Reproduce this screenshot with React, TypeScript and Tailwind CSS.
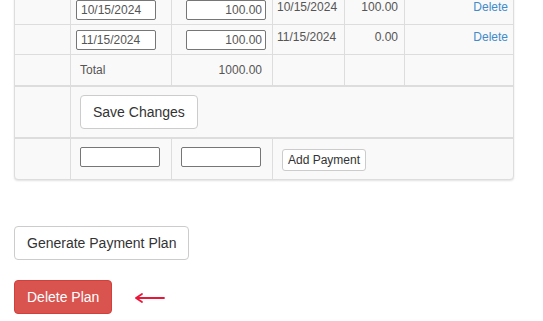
import React from 'react';

type Payment = { due: string; amount: string; paidOn: string; paid: string };

const payments: Payment[] = [
  { due: '10/15/2024', amount: '100.00', paidOn: '10/15/2024', paid: '100.00' },
  { due: '11/15/2024', amount: '100.00', paidOn: '11/15/2024', paid: '0.00' },
];

const cols = 'grid grid-cols-[56px_101px_101px_72px_60px_108px]';
const cell = 'border-r border-[#ddd]';

function PaymentRow({ p, first }: { p: Payment; first?: boolean }) {
  return (
    <div className={`${cols} ${first ? '' : 'border-t border-[#ddd]'}`}>
      <div className={cell} />
      <div className={`${cell} pl-[5px] pt-[5px] pb-[4px]`}>
        <input
          defaultValue={p.due}
          className="block h-[20px] w-[80px] rounded-[2px] border border-[#767676] bg-white px-[4px] text-[12px] text-[#555] outline-none"
        />
      </div>
      <div className={`${cell} flex justify-end pr-[6px] pt-[5px] pb-[4px]`}>
        <input
          defaultValue={p.amount}
          className="block h-[20px] w-[80px] rounded-[2px] border border-[#767676] bg-white px-[3px] text-right text-[12px] text-[#555] outline-none"
        />
      </div>
      <div className={`${cell} pl-[4px] pt-[5px] text-[12px] leading-[1.2] text-[#555]`}>{p.paidOn}</div>
      <div className={`${cell} pr-[6px] pt-[5px] text-right text-[12px] leading-[1.2] text-[#555]`}>{p.paid}</div>
      <div className="pr-[5px] pt-[5px] text-right text-[12px] leading-[1.2]">
        <a href="#" className="text-[#428bca]">Delete</a>
      </div>
    </div>
  );
}

export default function App() {
  return (
    <div className="min-h-[321px] bg-white px-[14px] text-[#333]" style={{ fontFamily: '"Liberation Sans", Arial, sans-serif' }}>
      <div className="-mt-[6px] w-[500px] overflow-hidden rounded-b-[4px] border border-[#ddd] bg-[#f9f9f9] shadow-[0_1px_2px_rgba(0,0,0,0.12)]">
        {payments.map((p, i) => (
          <PaymentRow key={p.due} p={p} first={i === 0} />
        ))}

        {/* Total */}
        <div className={`${cols} border-t border-[#ddd]`}>
          <div className={cell} />
          <div className={`${cell} py-[8px] pl-[9px] text-[12px] leading-[14px] text-[#555]`}>Total</div>
          <div className={`${cell} py-[8px] pr-[10px] text-right text-[12px] leading-[14px] text-[#555]`}>1000.00</div>
          <div className={cell} />
          <div className={cell} />
          <div />
        </div>

        {/* Save */}
        <div className={`${cols} border-t-2 border-[#ddd]`}>
          <div className={cell} />
          <div className="col-span-5 py-[8px] pl-[9px]">
            <button className="h-[34px] rounded-[4px] border border-[#ccc] bg-white px-[12px] text-[14px] text-[#333]">
              Save Changes
            </button>
          </div>
        </div>

        {/* New payment */}
        <div className={`${cols} border-t-2 border-[#ddd]`}>
          <div className={cell} />
          <div className={`${cell} py-[8px] pl-[9px]`}>
            <input className="block h-[20px] w-[80px] rounded-[2px] border border-[#767676] bg-white text-[12px] outline-none" />
          </div>
          <div className={`${cell} py-[8px] pl-[9px]`}>
            <input className="block h-[20px] w-[80px] rounded-[2px] border border-[#767676] bg-white text-[12px] outline-none" />
          </div>
          <div className="col-span-3 py-[8px] pl-[9px]">
            <button className="h-[22px] rounded-[3px] border border-[#ccc] bg-white px-[5px] text-[12px] text-[#333]">
              Add Payment
            </button>
          </div>
        </div>
      </div>

      <div className="mt-[46px] flex flex-col items-start gap-[20px]">
        <button className="h-[34px] rounded-[4px] border border-[#ccc] bg-white px-[12px] text-[14px] text-[#333]">
          Generate Payment Plan
        </button>
        <div className="flex items-center gap-[22px]">
          <button className="h-[34px] rounded-[4px] border border-[#d43f3a] bg-[#d9534f] px-[12px] text-[14px] text-white">
            Delete Plan
          </button>
          <svg width="32" height="14" viewBox="0 0 32 14" className="mt-[2px]">
            <path d="M2 7 H30 M2 7 L8 3 M2 7 L8 11" stroke="#e8173a" strokeWidth="1.8" fill="none" strokeLinecap="round" />
          </svg>
        </div>
      </div>
    </div>
  );
}
